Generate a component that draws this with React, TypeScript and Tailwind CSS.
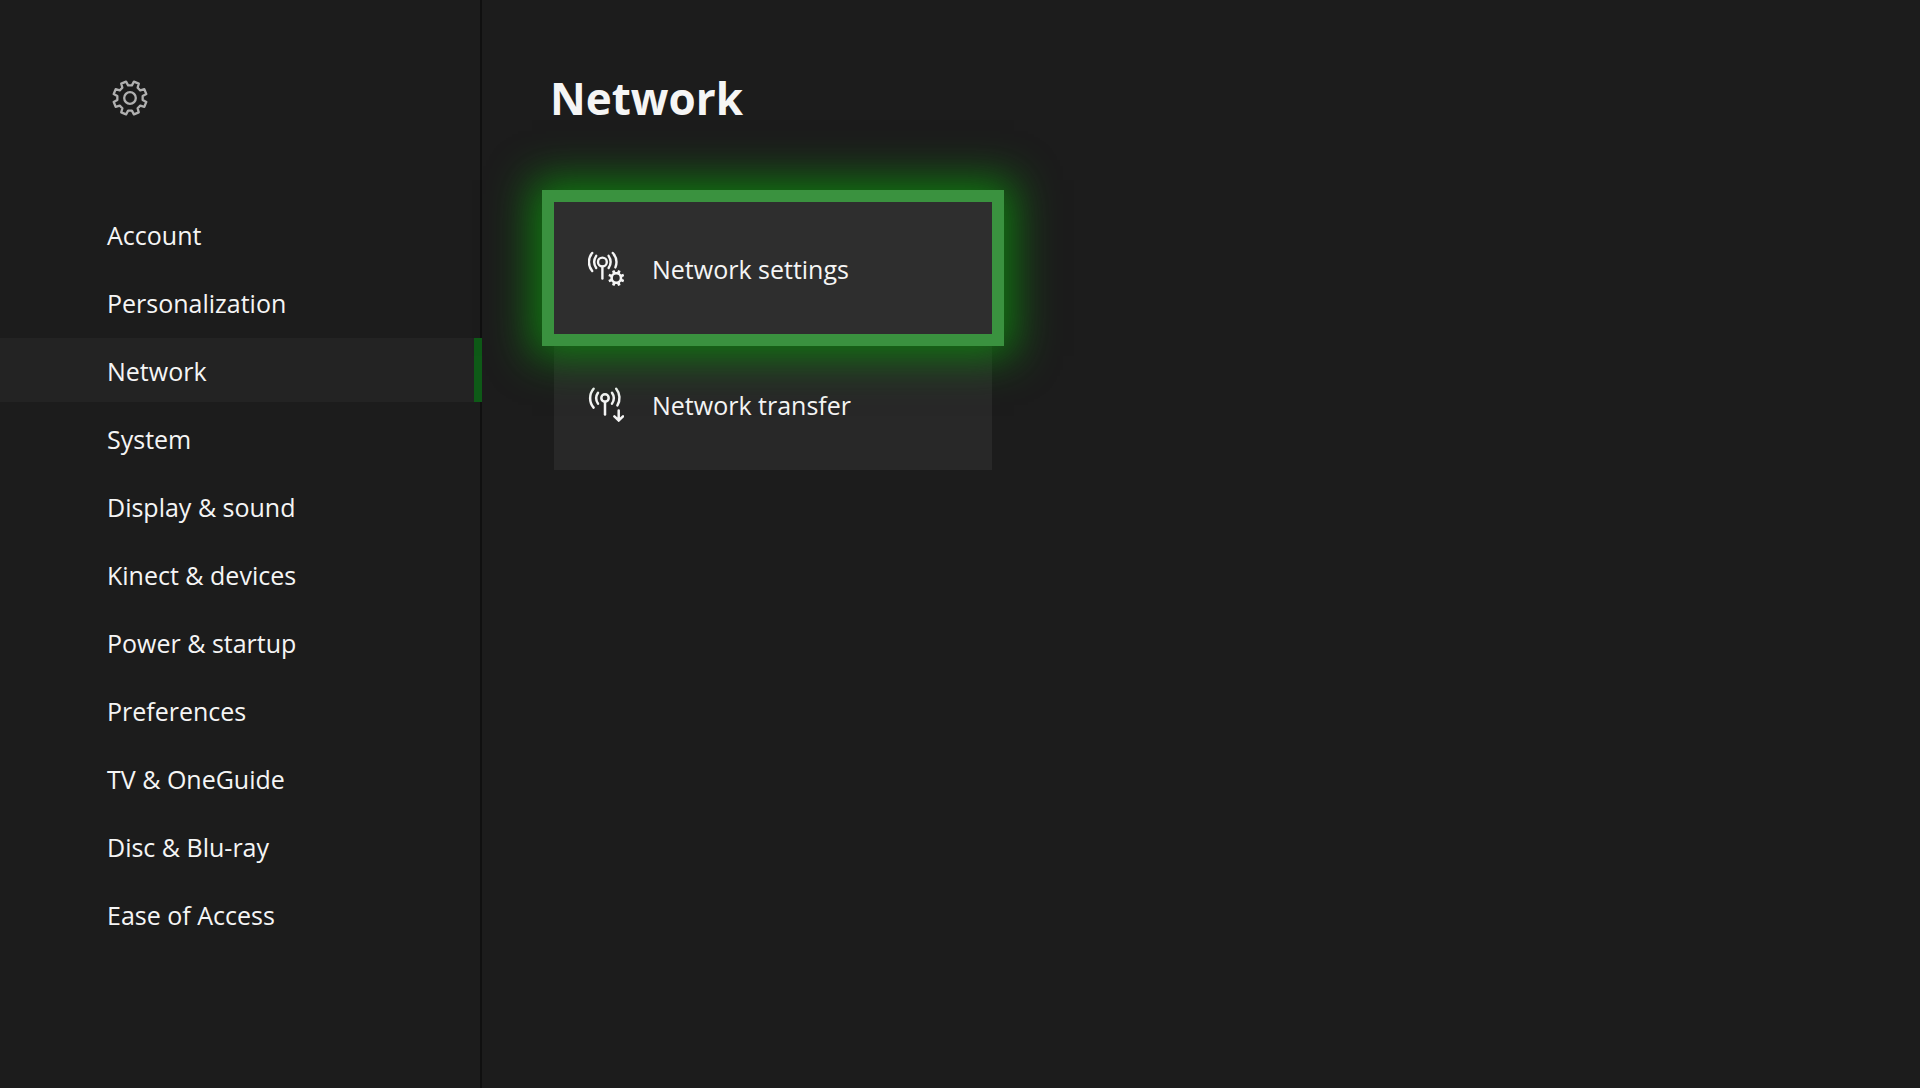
import { useState } from 'react';
import type { ReactNode } from 'react';

const sections = [
  'Account',
  'Personalization',
  'Network',
  'System',
  'Display & sound',
  'Kinect & devices',
  'Power & startup',
  'Preferences',
  'TV & OneGuide',
  'Disc & Blu-ray',
  'Ease of Access',
];

// Outline of an eight-toothed gear, with a gap between teeth at the top
function gearPath(cx: number, cy: number, outer: number, inner: number) {
  const points: string[] = [];
  for (let i = 0; i < 8; i++) {
    const mid = 22.5 + i * 45;
    const corners = [
      [mid - 14, inner],
      [mid - 9, outer],
      [mid + 9, outer],
      [mid + 14, inner],
    ];
    corners.forEach(([deg, r]) => {
      const a = (deg * Math.PI) / 180;
      points.push(`${(cx + r * Math.sin(a)).toFixed(2)} ${(cy - r * Math.cos(a)).toFixed(2)}`);
    });
  }
  return `M${points.join('L')}Z`;
}

function GearIcon() {
  return (
    <svg viewBox="0 0 36 36" className="size-9" fill="none" stroke="#b0b0b0" strokeWidth="2.3" strokeLinejoin="round" aria-hidden="true">
      <path d={gearPath(18, 18, 16.8, 12.8)} />
      <circle cx="18" cy="18" r="5.8" />
    </svg>
  );
}

function NetworkSettingsIcon() {
  return (
    <svg viewBox="0 0 36 36" className="size-9 shrink-0" fill="none" stroke="#f5f5f5" strokeWidth="2.4" strokeLinecap="round" aria-hidden="true">
      <circle cx="14.4" cy="12" r="4.4" />
      <path d="M14.4 16.6V28.6" />
      <path d="M4.2 3A14 14 0 0 0 4.2 21" />
      <path d="M8.2 5.8A11 11 0 0 0 8.2 18" />
      <path d="M20.6 5.8A11 11 0 0 1 20.6 18" />
      <path d="M24.8 3A14 14 0 0 1 27.4 17.4" />
      <path
        d={`${gearPath(28.3, 28, 8.2, 6)}M28.3 24.6a3.4 3.4 0 1 0 0 6.8a3.4 3.4 0 1 0 0-6.8Z`}
        fill="#f5f5f5"
        fillRule="evenodd"
        stroke="none"
      />
    </svg>
  );
}

function NetworkTransferIcon() {
  return (
    <svg viewBox="0 0 36 36" className="size-9 shrink-0" fill="none" stroke="#f5f5f5" strokeWidth="2.5" strokeLinecap="round" aria-hidden="true">
      <circle cx="17" cy="12" r="3.7" />
      <path d="M17 15.8V28.6" />
      <path d="M5.6 2.8A14.5 14.5 0 0 0 5.6 21.6" />
      <path d="M10 6.8A9.5 9.5 0 0 0 10 17.6" />
      <path d="M24 6.8A9.5 9.5 0 0 1 24 17.6" />
      <path d="M28.2 2.8A14.5 14.5 0 0 1 29.4 19.4" />
      <path d="M30.7 24.5V34.3M26.4 30.4L30.7 34.5L35 30.4" />
    </svg>
  );
}

interface TileProps {
  icon: ReactNode;
  label: string;
  focused?: boolean;
}

function Tile({ icon, label, focused }: TileProps) {
  return (
    <button
      type="button"
      className={`flex h-33 w-full items-center gap-7 px-[34px] text-left text-[25px] leading-8 ${
        focused
          ? 'relative z-10 bg-[#2e2e2e] shadow-[0_0_0_12px_#3a923f,0_0_40px_22px_#107c10]'
          : 'bg-[#282828]'
      }`}
    >
      {icon}
      <span className="pt-0.5">{label}</span>
    </button>
  );
}

export default function App() {
  const [active, setActive] = useState('Network');

  return (
    <div className="flex min-h-screen bg-[#1c1c1c] font-['Open_Sans','Noto_Sans',sans-serif] text-[#f5f5f5]">
      <aside className="w-[482px] shrink-0 border-r-2 border-[#101010] pt-20">
        <div className="mb-[86px] pl-28">
          <GearIcon />
        </div>
        <nav className="-mr-0.5 flex flex-col gap-1" aria-label="Settings">
          {sections.map((section) => (
            <button
              key={section}
              type="button"
              onClick={() => setActive(section)}
              className={`h-16 border-r-8 pt-0.5 pl-[107px] text-left text-[25px] leading-8 ${
                section === active ? 'border-[#0e5a17] bg-[#232323]' : 'border-transparent'
              }`}
            >
              {section}
            </button>
          ))}
        </nav>
      </aside>

      <main className="min-w-0 flex-1 px-[68px] pt-[70px]">
        <h1 className="mb-[76px] text-[44px] leading-14 font-bold">Network</h1>
        <div className="flex max-w-[442px] flex-col gap-1 pl-1">
          <Tile icon={<NetworkSettingsIcon />} label="Network settings" focused />
          <Tile icon={<NetworkTransferIcon />} label="Network transfer" />
        </div>
      </main>
    </div>
  );
}
